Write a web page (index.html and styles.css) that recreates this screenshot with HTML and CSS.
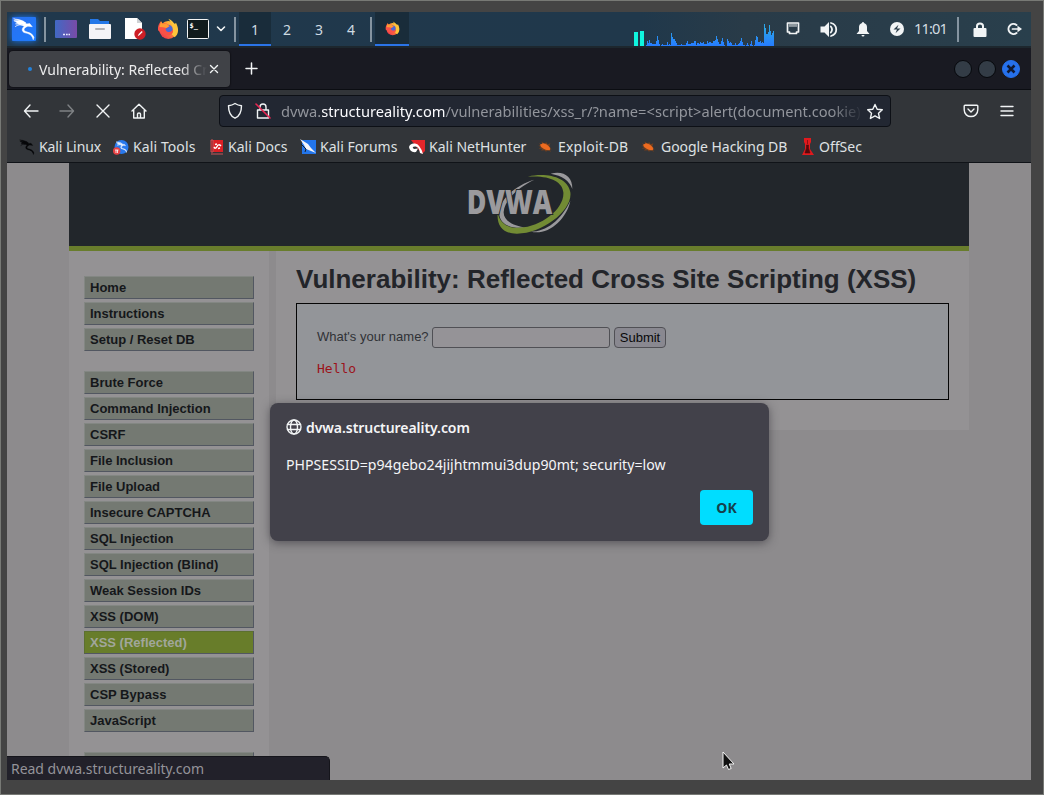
FILE: index.html
```html
<!DOCTYPE html>
<html lang="en">
<head>
<meta charset="utf-8">
<title>Vulnerability: Reflected Cross Site Scripting (XSS)</title>
<link rel="stylesheet" href="styles.css">
</head>
<body>
<svg class="defs" width="0" height="0">
  <defs>
    <linearGradient id="blue" x1="0" y1="0" x2="1" y2="1"><stop offset="0" stop-color="#2a70ee"/><stop offset="1" stop-color="#1d7cff"/></linearGradient>
    <linearGradient id="violet"><stop offset="0" stop-color="#4169c5"/><stop offset="1" stop-color="#794ba7"/></linearGradient>
    <linearGradient id="fire" x1="1" y1="0" x2="0.2" y2="1"><stop offset="0" stop-color="#ffe34a"/><stop offset="0.45" stop-color="#ff9430"/><stop offset="1" stop-color="#f0304f"/></linearGradient>
    <linearGradient id="bars" x1="0" y1="0" x2="0" y2="1"><stop offset="0.2" stop-color="#2ba5e8"/><stop offset="1" stop-color="#267cff"/></linearGradient>
    <symbol id="firefox" viewBox="0 0 66 66">
      <circle cx="34" cy="36" r="27" fill="url(#fire)"/>
      <path d="M34 2C46 7 50 13 52 20L57 14C66 32 66 47 53 58L44 49C52 38 48 20 34 2Z" fill="#ffc43b"/>
      <circle cx="33" cy="34" r="14" fill="#4c69d5"/>
      <path d="M3 37C2 25 6 16 12 10L17 18C22 14 29 15 32 20L38 25L29 30C24 31 25 40 34 42C41 43 46 38 48 34C50 48 40 54 29 52C16 50 10 43 3 37Z" fill="#fa5147"/>
      <path d="M7 27L12 10L18 19C25 15 30 17 32 21L38 24L28 30L18 28Z" fill="#ff9d34"/>
    </symbol>
    <symbol id="dragon" viewBox="0 0 72 70">
      <path d="M4 9C19 8 34 10 44 19L54 18L62 28L48 26C42 29 36 31 36 38C38 45 57 42 67 62C57 51 48 49 39 47C29 44 27 34 37 26C29 19 18 17 9 19L29 20C19 21 12 25 8 28C16 21 30 21 40 27L31 24C18 20 12 13 4 9ZM3 3C19 5 33 7 43 17C28 9 16 8 3 3ZM47 46C58 46 64 53 67 62L65 69C62 58 57 52 47 46Z" fill="currentColor" stroke="currentColor" stroke-width="1.500"/>
    </symbol>
    <symbol id="bug" viewBox="0 0 42 36">
      <path d="M2 8L12 11L11 3L19 9L25 5L29 11L37 8L34 17L41 27L34 25L39 34L29 29L24 34L20 29L9 30L13 25L2 24L9 20L1 15L10 15Z" fill="#74401f"/>
      <path d="M6 13L15 8Q27 9 35 20L37 28Q26 31 17 25Q9 23 6 13Z" fill="#ed6b20"/>
    </symbol>
  </defs>
</svg>
<div class="desktop">
  <header class="panel">
    <div class="cell w34"><svg class="kali" width="34" height="34" viewBox="0 0 34 34"><rect x="5" y="5" width="24" height="24" rx="1" fill="url(#blue)"/><use href="#dragon" x="5.5" y="5.5" width="23" height="23"/></svg></div>
    <i class="sep"></i>
    <div class="cell w34"><svg width="22" height="18"><rect width="22" height="18" rx="1" fill="url(#violet)"/><path d="M8 14.5h2M11 14.5h1.700M13.500 14.500h1.500" stroke="#e9eaff" stroke-width="1.500"/></svg></div>
    <div class="cell w34"><svg width="22" height="20"><path d="M1 0h8l2 2h9v6H1z" fill="#2578e8"/><rect y="5" width="22" height="15" rx="1" fill="#f5f4f7"/><path d="M7 10h8" stroke="#b2b2b6" stroke-width="2" stroke-linecap="round"/></svg></div>
    <div class="cell w35"><svg width="22" height="24"><path d="M1 1h12l5 5v16H1z" fill="#fff"/><path d="M13 1v5h5z" fill="#cfd2d5"/><circle cx="16" cy="17" r="5.700" fill="#cd1e25"/><path d="M13.700 19.300l1-2.300 3-3 1 1-3 3z" fill="#fff"/></svg></div>
    <div class="cell w32"><svg width="22" height="22"><use href="#firefox"/></svg></div>
    <div class="cell w28"><svg width="22" height="20"><rect x=".5" y=".5" width="21" height="19" rx="1" fill="#111b1d" stroke="#f4f5f5"/><text x="2.500" y="9" class="prompt">$_</text></svg></div>
    <div class="cell w19"><svg width="10" height="8" class="line"><path d="M1.500 2L5 5.500 8.500 2" stroke-width="1.600"/></svg></div>
    <i class="sep"></i>
    <div class="cell ws on">1</div><div class="cell ws">2</div><div class="cell ws">3</div><div class="cell ws">4</div>
    <i class="sep"></i>
    <div class="cell w34 on"><svg class="task" width="15" height="15"><use href="#firefox"/></svg></div>
    <svg class="graph" width="140" height="34" viewBox="42 36 420 102" shape-rendering="crispEdges">
      <path d="M42 96h12v42H42zM60 93h12v45H60z" fill="#10f5df"/>
      <path d="M78 138V135H81V123H84V129H87V120H90V129H96V132H108V123H111V108H114V120H117V132H120V138H123V135H126V132H129V135H141V126H144V135H147V132H150V135H153V99H156V111H159V117H165V123H168V129H171V135H183V132H186V135H198V129H201V123H204V132H213V129H222V123H228V135H231V129H237V132H240V126H243V129H249V126H252V132H261V123H264V129H267V126H273V129H279V123H285V120H288V108H291V117H294V126H297V132H303V123H306V114H309V126H312V135H315V138H321V117H324V123H327V129H330V126H333V129H336V135H345V129H348V135H354V132H357V129H360V123H363V114H366V126H369V135H375V138H378V135H381V129H384V135H387V138H390V132H393V123H396V135H399V138H402V135H405V120H408V108H411V111H414V126H420V123H423V129H426V126H429V129H432V72H435V84H438V102H444V96H447V75H450V93H453V105H456V99H459V93H462V138z" fill="url(#bars)"/>
    </svg>
    <div class="cell w37"><svg width="16" height="14" class="line"><path d="M2.500 1h11v9h-2v1.500h-7V10h-2z" stroke-width="1.700"/><path d="M5 2v2.500M7 2v2.500M9 2v2.500M11 2v2.500" stroke-width="1"/></svg></div>
    <div class="cell w35"><svg width="18" height="17" class="line"><path d="M.5 5.500h4L9 1v15L4.500 11.500h-4z" fill="#f1f4f5" stroke="none"/><path d="M10.800 5.500q2.500 3 0 6M11 2c7 2 7 11 0 13" stroke-width="1.800"/></svg></div>
    <div class="cell w34"><svg width="14" height="16" fill="#f1f4f5"><path d="M7 1q1 0 1 1q3 1 3 4v4l2.500 3H.5L3 10V6q0-3 3-4q0-1 1-1zM5.500 14h3q0 1.500-1.500 1.500T5.500 14z"/></svg></div>
    <div class="cell w34"><svg width="14" height="14"><circle cx="7" cy="7" r="7" fill="#f1f4f5"/><path d="M8.500 2.800L3.500 7.500H7L5.500 11.200 10.500 6.500H7z" fill="#2b3d49"/></svg></div>
    <div class="clock">11:01</div>
    <i class="sep"></i>
    <div class="cell w36"><svg width="14" height="15"><rect x=".5" y="6" width="13" height="9" rx="1" fill="#f1f4f5"/><path d="M4 7V4q0-2.500 3-2.500T10 4v3" fill="none" stroke="#f1f4f5" stroke-width="2"/></svg></div>
    <div class="cell w33"><svg width="15" height="14" class="line"><path d="M9.500 3A5 5 0 1 0 9.500 11" stroke-width="2"/><path d="M5.500 7h6" stroke-width="1.700"/><path d="M10.500 3.800v6.400L15 7z" fill="#f1f4f5" stroke="none"/></svg></div>
  </header>

  <div class="tabs">
    <div class="tab"><i class="dot"></i><span class="tab-title">Vulnerability: Reflected Cr</span><svg width="10" height="10" class="line"><path d="M1.500 1.500l7 7m0-7l-7 7"/></svg></div>
    <svg class="plus line" width="13" height="13"><path d="M6.500 1v11M1 6.500h11" stroke-width="1.500"/></svg>
    <div class="window-buttons"><i></i><i></i><i class="close"><svg width="10" height="10"><path d="M1.500 1.500l7 7m0-7l-7 7" stroke="#101a33" stroke-width="2.500"/></svg></i></div>
  </div>

  <div class="nav">
    <div class="cell nb"><svg width="16" height="14" class="line"><path d="M7 1L1.500 7 7 13M2 7h13"/></svg></div>
    <div class="cell nb dim"><svg width="16" height="14" class="line"><path d="M9 1l5.500 6L9 13M14 7H1"/></svg></div>
    <div class="cell nb"><svg width="14" height="14" class="line"><path d="M1 1l12 12M13 1L1 13"/></svg></div>
    <div class="cell nb"><svg width="16" height="16" class="line"><path d="M1 8L8 1.300 15 8M2.700 7v8h10.600V7M6.500 15v-4q0-1 1.500-1t1.500 1v4"/></svg></div>
    <div class="urlbar">
      <svg width="16" height="18" class="line"><path d="M8 1.500c2 1.300 4 2 6.500 2.200C14.500 10 13 14 8 16.200 3 14 1.500 10 1.500 3.700 4 3.500 6 2.800 8 1.500z"/></svg>
      <svg class="lock line" width="16" height="18"><path d="M2.500 8h11v8h-11zM5 8V5q0-3 3-3t3 3v3"/><path d="M1 2l14 14" stroke="#e92652" stroke-width="1.600"/></svg>
      <div class="url">dvwa.<b>structureality.com</b>/vulnerabilities/xss_r/?name=&lt;script&gt;alert(document.cookie)</div>
      <svg width="18" height="17" class="line"><path d="M9 1.500l2.200 4.800 5.100.5-3.800 3.500 1.100 5.200L9 12.900l-4.600 2.600 1.100-5.200L1.700 6.800l5.100-.5z"/></svg>
    </div>
    <div class="nav-end">
      <svg width="16" height="14" class="line"><path d="M2 1.200h12q.8 0 .8.800v3.800c0 9-13.600 9-13.600 0V2q0-.8.800-.8zM5 5l3 3 3-3"/></svg>
      <svg width="14" height="12" class="line"><path d="M1 1.500h12M1 6h12M1 10.500h12"/></svg>
    </div>
  </div>

  <div class="bookmarks">
    <div class="bm b1"><svg width="16" height="16" color="#050708"><use href="#dragon"/></svg><span>Kali Linux</span></div>
    <div class="bm b2"><svg width="16" height="16" color="#e9f1ff"><circle cx="8.500" cy="8" r="7" fill="#2879ed"/><use href="#dragon" x="2.500" y="2" width="12" height="12"/><circle cx="3.700" cy="12" r="3.700" fill="#e84143"/><path d="M2 11h3.500M3 11v3M4.500 11v3" stroke="#fff" stroke-width=".8"/></svg><span>Kali Tools</span></div>
    <div class="bm b3"><svg width="14" height="16"><path d="M1 1h12v12H1z" fill="#dc1f24"/><path d="M1 1h2v12H1zM1 15h12" fill="#98191e" stroke="#c95558"/><path d="M4 8q1.500 2.500 3-.5t4-.5M5 5.500l2-.5M8 9.500l2-.5" fill="none" stroke="#fff" stroke-width="1.500"/></svg><span>Kali Docs</span></div>
    <div class="bm b4"><svg width="16" height="16"><path d="M2 1h14v14H2z" fill="#2375ea"/><path d="M0 0l8 5 3 4 5 5-5-2-5-2-2-4z" fill="#f4f5fa"/><path d="M1 5l5 5-1 3" fill="none" stroke="#16202d"/></svg><span>Kali Forums</span></div>
    <div class="bm b5"><svg width="16" height="16"><path d="M2 1h14v11l-3 3z" fill="#e5262b"/><path d="M0 8q1-4 6-3.500T14 15l-3-1q-1-7-5-6.500T5 10l4-.500-2 3.500q-6 1-7-5z" fill="#fff"/></svg><span>Kali NetHunter</span></div>
    <div class="bm b6"><svg width="14" height="13"><use href="#bug"/></svg><span>Exploit-DB</span></div>
    <div class="bm b7"><svg width="14" height="13"><use href="#bug"/></svg><span>Google Hacking DB</span></div>
    <div class="bm b8"><svg width="14" height="17"><path d="M3 0h7v4L9 6v5l4 6H1l3-6V6L3 4z" fill="#e1191d"/><path d="M6.500 2v4M5.500 7h2v3l1.500 5H4l1.500-5z" stroke="#56080b" stroke-width=".6" fill="#56080b"/></svg><span>OffSec</span></div>
  </div>

  <main class="viewport">
    <div class="site">
      <div class="site-header">
        <svg width="160" height="83" viewBox="0 0 480 249">
          <path d="M283 50C236 63 182 101 178 146C175 183 211 200 259 193C222 190 190 173 191 147C194 106 242 69 283 50Z" fill="#9a999c"/>
          <path d="M332 32C370 22 398 40 397 78C388 53 367 38 332 32ZM391 113C380 170 322 219 273 206C318 206 364 171 391 113Z" fill="#9a999c"/>
          <path d="M264 41C319 28 383 42 391 88C399 142 307 213 230 212C190 212 170 190 173 151C181 182 202 196 239 194C305 191 374 136 370 88C368 55 326 36 264 41Z" fill="#728b34"/>
          <text x="80" y="154" class="brand" textLength="257" lengthAdjust="spacingAndGlyphs">DVWA</text>
        </svg>
      </div>
      <div class="columns">
        <nav class="menu">
          <ul><li>Home</li><li>Instructions</li><li>Setup / Reset DB</li></ul>
          <ul><li>Brute Force</li><li>Command Injection</li><li>CSRF</li><li>File Inclusion</li><li>File Upload</li><li>Insecure CAPTCHA</li><li>SQL Injection</li><li>SQL Injection (Blind)</li><li>Weak Session IDs</li><li>XSS (DOM)</li><li class="selected">XSS (Reflected)</li><li>XSS (Stored)</li><li>CSP Bypass</li><li>JavaScript</li></ul>
          <ul><li></li></ul>
        </nav>
        <section class="content">
          <h1>Vulnerability: Reflected Cross Site Scripting (XSS)</h1>
          <div class="box">
            <div class="form"><span class="label">What's your name?</span><span class="field"></span><span class="submit">Submit</span></div>
            <pre>Hello</pre>
          </div>
        </section>
      </div>
    </div>
  </main>

  <div class="dialog">
    <div class="origin"><svg width="16" height="16" class="line"><circle cx="8" cy="8" r="7"/><ellipse cx="8" cy="8" rx="3.500" ry="7"/><path d="M1.500 5.500h13M1.500 10.500h13"/></svg><b>dvwa.structureality.com</b></div>
    <p>PHPSESSID=p94gebo24jijhtmmui3dup90mt; security=low</p>
    <div class="ok">OK</div>
  </div>
  <div class="status">Read dvwa.structureality.com</div>
  <svg class="cursor" width="14" height="20"><path d="M1 1v16l3.500-3 2 4.500 2.700-1-2-4.500H12z" fill="#111" stroke="#f4f4f4"/></svg>
</div>
</body>
</html>
```

FILE: styles.css
```css
* { box-sizing: border-box; }
body {
  margin: 0; width: 1044px; height: 795px; overflow: hidden;
  padding: 11px 12px 14px 6px;
  background: #444; border: 1px solid #777975;
  font-family: "Noto Sans", sans-serif; font-size: 14px; color: #dfe1e3;
}
svg { display: block; flex: none; }
.defs { position: absolute; }
.line { fill: none; stroke: #f1f4f5; stroke-width: 1.4; stroke-linecap: round; stroke-linejoin: round; }
.desktop { position: relative; width: 1024px; height: 768px; overflow: hidden; display: flex; flex-direction: column; background: #8d8b8d; }

.panel { height: 34px; flex: none; display: flex; background: linear-gradient(90deg, #20384c 0, #20384b 62%, #293b48 72%, #293f4c 100%); }
.cell { display: flex; align-items: center; justify-content: center; flex: none; }
.w19 { width: 17px; margin-right: 2px; } .w28 { width: 28px; } .w32 { width: 32px; } .w33 { width: 33px; }
.w34 { width: 34px; } .w35 { width: 35px; } .w36 { width: 36px; } .w37 { width: 37px; }
.kali { color: #fff; filter: drop-shadow(0 0 3px #1878f5); }
.prompt { font: bold 7px "DejaVu Sans Mono", monospace; fill: #fff; }
.sep { width: 8px; flex: none; background: linear-gradient(#8594a0, #8594a0) center / 2px 25px no-repeat; }
.ws { width: 32px; font-size: 14px; color: #cfdbe2; }
.on { background: #192c3a; box-shadow: inset 0 -2px #2b74e8; }
.task { margin-top: -1px; }
.graph { margin-left: auto; }
.clock { width: 40px; line-height: 33px; font-size: 14.67px; color: #d3dce2; letter-spacing: -.9px; }

.tabs { height: 44px; flex: none; display: flex; align-items: center; background: #191a22; border-top: 2px solid #1d272e; border-bottom: 1px solid #0b0d12; padding-left: 2px; }
.tab { width: 221px; height: 36px; border-radius: 4px; background: #404247; box-shadow: 0 0 2px #000; display: flex; align-items: center; padding: 0 11px 0 19px; }
.dot { width: 4px; height: 4px; border-radius: 50%; background: #2282dd; }
.tab-title { padding-top: 1px; margin-left: 7px; width: 170px; margin-right: 1px; white-space: nowrap; color: #ececed; -webkit-mask: linear-gradient(90deg, #000 142px, transparent 168px); mask: linear-gradient(90deg, #000 142px, transparent 168px); }
.plus { margin-left: 15px; }
.window-buttons { margin-left: auto; margin-right: 11px; display: flex; gap: 6px; }
.window-buttons i { width: 18px; height: 18px; border-radius: 50%; background: #333c46; border: 1px solid #06080c; display: flex; align-items: center; justify-content: center; }
.window-buttons .close { background: #2671ec; border-color: #2671ec; }

.nav { height: 42px; flex: none; display: flex; align-items: center; background: #323539; padding-left: 6px; }
.nb { width: 36px; }
.dim { opacity: .4; }
.urlbar { margin-left: 62px; width: 672px; height: 32px; border: 1px solid #0d1016; border-radius: 4px; background: #222732; display: flex; align-items: center; padding: 0 5px 0 7px; }
.lock { margin-left: 12px; }
.url { margin-left: 10px; width: 580px; margin-right: 5px; white-space: nowrap; font-size: 14.67px; color: #92959c; -webkit-mask: linear-gradient(90deg, #000 550px, transparent 582px); mask: linear-gradient(90deg, #000 550px, transparent 582px); }
.url b { font-weight: 400; color: #fbfbfe; }
.nav-end { margin-left: auto; margin-right: 17px; display: flex; align-items: center; gap: 21px; }

.bookmarks { height: 31px; flex: none; display: flex; background: #323539; border-bottom: 1px solid #101318; padding-left: 12px; line-height: 29px; }
.bm { display: flex; align-items: center; flex: none; gap: 4px; height: 29px; white-space: nowrap; }
.b1 { width: 94px; letter-spacing: -.1px; } .b2 { width: 97px; letter-spacing: .1px; } .b3 { width: 90px; } .b4 { width: 109px; }
.b5 { width: 129px; } .b6 { width: 103px; gap: 6px; letter-spacing: .2px; } .b7 { width: 160px; gap: 6px; letter-spacing: -.05px; }

.viewport { flex: 1; min-height: 0; overflow: hidden; padding-left: 62px; }
.site { width: 900px; font-family: "Liberation Sans", Arial, sans-serif; color: #1c1e22; }
.site-header { height: 88px; background: #22262b; border-bottom: 5px solid #697d2c; padding-left: 371px; }
.brand { font: 800 99px "Open Sans", "Noto Sans", sans-serif; fill: #9b9a9d; stroke: #22262b; stroke-width: 6px; paint-order: stroke; }
.columns { display: flex; align-items: flex-start; background: #8d8b8d; }
.menu { width: 200px; height: 540px; background: #949294; padding: 25px 15px; }
.menu ul { list-style: none; margin: 0 0 20px; padding: 0; display: flex; flex-direction: column; gap: 3px; }
.menu li { height: 23px; background: #747972; border: 1px solid #838783; border-right-color: #525761; border-bottom-color: #525761; padding-left: 5px; font-size: 13px; font-weight: bold; line-height: 21px; color: #15171a; }
.menu .selected { background: #687d2a; color: #a1a69b; border-top-color: #5c7030; border-left-color: #5c7030; }
.content { margin-left: 7px; width: 693px; height: 179px; background: #949294; padding: 13px 20px; }
h1 { margin: 0 0 8px; font-size: 26px; line-height: 31px; white-space: nowrap; color: #23252a; }
.box { width: 653px; height: 97px; border: 1px solid #050505; background: #939599; padding: 21px 20px; }
.form { display: flex; align-items: center; height: 24px; font-size: 13px; white-space: nowrap; }
.label { width: 115px; line-height: 24px; height: 24px; color: #303236; }
.field { width: 178px; height: 21px; border: 1px solid #505055; border-radius: 3px; background: #959397; }
.submit { margin-left: 4px; width: 52px; height: 21px; border: 1px solid #505055; border-radius: 4px; background: #898890; color: #08080a; text-align: center; line-height: 19px; font-size: 13px; }
pre { margin: 12px 0 0; font: 13px/16px "DejaVu Sans Mono", monospace; color: #9c1219; }

.dialog { position: absolute; left: 263px; top: 391px; width: 499px; height: 138px; border-radius: 8px; background: #42414a; box-shadow: 0 2px 10px rgba(40, 38, 45, .55); padding: 14px 16px; color: #f5f5f7; }
.origin { display: flex; align-items: center; height: 20px; gap: 4px; }
.origin b { font-weight: 600; letter-spacing: -.06px; }
.dialog p { margin: 17px 0 0; line-height: 22px; white-space: nowrap; font-size: 14.13px; }
.ok { margin: 14px 0 0 auto; width: 53px; height: 35px; border-radius: 4px; background: #00ddff; color: #15404b; font-weight: 700; text-align: center; line-height: 35px; }
.status { position: absolute; left: 0; bottom: 0; width: 323px; height: 24px; background: #22212a; border-top: 1px solid #15151b; border-right: 1px solid #15151b; border-top-right-radius: 5px; padding-left: 4px; line-height: 23px; color: #949399; letter-spacing: -.03px; }
.cursor { position: absolute; left: 715px; top: 739px; }
```
